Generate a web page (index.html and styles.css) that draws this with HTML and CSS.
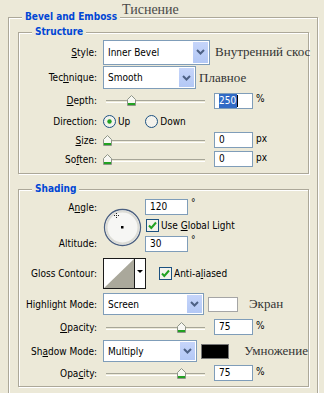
FILE: index.html
```html
<!DOCTYPE html>
<html lang="en">
<head>
    <meta charset="UTF-8">
    <meta name="viewport" content="width=device-width, initial-scale=1.0">
    <title>Bevel and Emboss</title>
    <link rel="stylesheet" href="styles.css">
</head>
<body>

    <!-- Bevel and Emboss group -->
    <section class="group outer">
        <h1 class="title">Bevel and Emboss</h1>
        <span class="note note-title">Тиснение</span>

        <!-- Structure -->
        <section class="group">
            <h2 class="title title-inner">Structure</h2>
            <div class="rows structure">
                <label class="lbl"><u>S</u>tyle:</label>
                <div class="ctl">
                    <div class="select select-style">
                        <span class="val">Inner Bevel</span>
                        <span class="btn"><svg width="9" height="6" viewBox="0 0 9 6"><path d="M1 1 L4.5 4.5 L8 1" fill="none" stroke="#4d6185" stroke-width="2"/></svg></span>
                    </div>
                    <span class="note note-style">Внутренний скос</span>
                </div>

                <label class="lbl">Tec<u>h</u>nique:</label>
                <div class="ctl">
                    <div class="select select-tech">
                        <span class="val">Smooth</span>
                        <span class="btn"><svg width="9" height="6" viewBox="0 0 9 6"><path d="M1 1 L4.5 4.5 L8 1" fill="none" stroke="#4d6185" stroke-width="2"/></svg></span>
                    </div>
                    <span class="note note-tech">Плавное</span>
                </div>

                <label class="lbl"><u>D</u>epth:</label>
                <div class="ctl">
                    <div class="slider">
                        <svg class="thumb" style="left: 24px" width="9" height="11" viewBox="0 0 9 11"><path d="M0.5 4.5 L4.5 0.5 L8.5 4.5 V10.5 H0.5 Z" fill="#f7f7f2" stroke="#8e9588"/><rect x="1" y="8" width="7" height="2" fill="#21a121"/></svg>
                    </div>
                    <div class="num"><span class="sel">250</span><span class="caret"></span></div>
                    <span class="unit">%</span>
                </div>

                <label class="lbl">Direction:</label>
                <div class="ctl">
                    <svg class="radio" width="13" height="13" viewBox="0 0 13 13"><circle cx="6.5" cy="6.5" r="6" fill="#f3f2ec" stroke="#1c5180"/><circle cx="6.5" cy="6.5" r="2.2" fill="#21a121"/></svg>
                    <span class="opt">Up</span>
                    <svg class="radio radio-down" width="13" height="13" viewBox="0 0 13 13"><circle cx="6.5" cy="6.5" r="6" fill="#f3f2ec" stroke="#1c5180"/></svg>
                    <span class="opt">Down</span>
                </div>

                <label class="lbl"><u>S</u>ize:</label>
                <div class="ctl">
                    <div class="slider">
                        <svg class="thumb" style="left: 0px" width="9" height="11" viewBox="0 0 9 11"><path d="M0.5 4.5 L4.5 0.5 L8.5 4.5 V10.5 H0.5 Z" fill="#f7f7f2" stroke="#8e9588"/><rect x="1" y="8" width="7" height="2" fill="#21a121"/></svg>
                    </div>
                    <div class="num">0</div>
                    <span class="unit">px</span>
                </div>

                <label class="lbl">So<u>f</u>ten:</label>
                <div class="ctl">
                    <div class="slider">
                        <svg class="thumb" style="left: 0px" width="9" height="11" viewBox="0 0 9 11"><path d="M0.5 4.5 L4.5 0.5 L8.5 4.5 V10.5 H0.5 Z" fill="#f7f7f2" stroke="#8e9588"/><rect x="1" y="8" width="7" height="2" fill="#21a121"/></svg>
                    </div>
                    <div class="num">0</div>
                    <span class="unit">px</span>
                </div>
            </div>
        </section>

        <!-- Shading -->
        <section class="group shading-group">
            <h2 class="title title-inner">Shading</h2>
            <div class="rows shading">
                <label class="lbl row-1">A<u>n</u>gle:</label>
                <svg class="dial" width="39" height="39" viewBox="0 0 39 39">
                    <circle cx="19.5" cy="19.5" r="18" fill="#f6f6f4" stroke="#4a5f80" stroke-width="1.3"/>
                    <circle cx="19.5" cy="19.5" r="16" fill="none" stroke="#dcdcd6" stroke-width="2"/>
                    <path d="M13.5 5 V10 M11 7.5 H16" stroke="#222" stroke-width="1" stroke-dasharray="1 1"/>
                    <rect x="18" y="18" width="2.5" height="2.5" fill="#000"/>
                </svg>
                <div class="ctl col-3 row-1">
                    <div class="num num-angle">120</div>
                    <span class="deg">°</span>
                </div>

                <div class="ctl col-3 row-2">
                    <svg class="check" width="13" height="13" viewBox="0 0 13 13"><rect x="0.5" y="0.5" width="12" height="12" fill="#f3f2ec" stroke="#1c5180"/><path d="M3 6.5 L5.3 9 L10 3.5" fill="none" stroke="#21a121" stroke-width="2"/></svg>
                    <span class="opt">Use <u>G</u>lobal Light</span>
                </div>

                <label class="lbl row-3">Altitude:</label>
                <div class="ctl col-3 row-3">
                    <div class="num num-angle">30</div>
                    <span class="deg">°</span>
                </div>

                <label class="lbl row-4">Gloss Contour:</label>
                <div class="ctl wide row-4">
                    <svg class="contour" width="43" height="31" viewBox="0 0 43 31">
                        <rect x="0.5" y="0.5" width="42" height="30" fill="#fff" stroke="#1a1a1a"/>
                        <polygon points="1,30 31,1 31,30" fill="#aaa89b"/>
                        <line x1="31.5" y1="0" x2="31.5" y2="31" stroke="#1a1a1a"/>
                        <polygon points="34,12 40,12 37,15" fill="#000"/>
                    </svg>
                    <svg class="check check-aa" width="13" height="13" viewBox="0 0 13 13"><rect x="0.5" y="0.5" width="12" height="12" fill="#f3f2ec" stroke="#1c5180"/><path d="M3 6.5 L5.3 9 L10 3.5" fill="none" stroke="#21a121" stroke-width="2"/></svg>
                    <span class="opt">Anti-a<u>l</u>iased</span>
                </div>

                <label class="lbl row-5">Hi<u>g</u>hlight Mode:</label>
                <div class="ctl wide row-5">
                    <div class="select select-mode">
                        <span class="val">Screen</span>
                        <span class="btn"><svg width="9" height="6" viewBox="0 0 9 6"><path d="M1 1 L4.5 4.5 L8 1" fill="none" stroke="#4d6185" stroke-width="2"/></svg></span>
                    </div>
                    <span class="swatch swatch-light"></span>
                    <span class="note note-screen">Экран</span>
                </div>

                <label class="lbl row-6"><u>O</u>pacity:</label>
                <div class="ctl wide row-6">
                    <div class="slider">
                        <svg class="thumb" style="left: 74px" width="9" height="11" viewBox="0 0 9 11"><path d="M0.5 4.5 L4.5 0.5 L8.5 4.5 V10.5 H0.5 Z" fill="#f7f7f2" stroke="#8e9588"/><rect x="1" y="8" width="7" height="2" fill="#21a121"/></svg>
                    </div>
                    <div class="num">75</div>
                    <span class="unit">%</span>
                </div>

                <label class="lbl row-7">Sh<u>a</u>dow Mode:</label>
                <div class="ctl wide row-7">
                    <div class="select select-mode">
                        <span class="val">Multiply</span>
                        <span class="btn"><svg width="9" height="6" viewBox="0 0 9 6"><path d="M1 1 L4.5 4.5 L8 1" fill="none" stroke="#4d6185" stroke-width="2"/></svg></span>
                    </div>
                    <span class="swatch swatch-dark"></span>
                    <span class="note note-multiply">Умножение</span>
                </div>

                <label class="lbl row-8">Opa<u>c</u>ity:</label>
                <div class="ctl wide row-8">
                    <div class="slider">
                        <svg class="thumb" style="left: 74px" width="9" height="11" viewBox="0 0 9 11"><path d="M0.5 4.5 L4.5 0.5 L8.5 4.5 V10.5 H0.5 Z" fill="#f7f7f2" stroke="#8e9588"/><rect x="1" y="8" width="7" height="2" fill="#21a121"/></svg>
                    </div>
                    <div class="num">75</div>
                    <span class="unit">%</span>
                </div>
            </div>
        </section>
    </section>

</body>
</html>
```

FILE: styles.css
```css
body {
    margin: 0;
    width: 324px;
    height: 393px;
    overflow: hidden;
    background: #ece9d8;
    font-family: "DejaVu Sans Condensed", "Liberation Sans", sans-serif;
    font-size: 10px;
    color: #000;
}
.group {
    border: 1px solid #aca899;
    box-shadow: inset 1px 1px 0 #fff, 1px 1px 0 #fff;
}
.outer {
    position: relative;
    width: 310px;
    box-sizing: border-box;
    margin: 17px 0 0 8px;
    padding: 0 9px 8px;
}
.outer > .group {
    width: 291px;
    box-sizing: border-box;
    margin-top: 8px;
}
.outer > .shading-group {
    margin-top: 15px;
}
.title {
    width: fit-content;
    height: 14px;
    margin: -8px 0 0 4px;
    padding: 0 3px;
    background: #ece9d8;
    color: #0046d5;
    font-size: 10px;
    font-weight: bold;
    line-height: 14px;
}
.title-inner {
    margin-left: 13px;
}
.note {
    font-family: "Liberation Serif", serif;
    font-size: 13px;
    color: #333;
    white-space: nowrap;
}
.note-title {
    position: absolute;
    left: 113px;
    top: -15px;
    font-size: 14px;
    line-height: 14px;
    color: #4a4a4a;
}
.note-style { margin-left: 5px; }
.note-tech { margin-left: 3px; }
.note-screen { margin-left: 11px; }
.note-multiply { margin-left: 15px; }

/* form rows */
.rows {
    display: grid;
    grid-template-columns: 84px 1fr;
    align-items: center;
}
.structure {
    grid-template-rows: 26px 25px 21px 20px 18px 20px;
    padding-bottom: 4px;
}
.shading {
    grid-template-columns: 84px 42px 1fr;
    grid-template-rows: 18px 18px 19px 40px 22px 24px 24px 20px;
    padding: 2px 0 3px;
}
.lbl {
    grid-column: 1;
    padding-right: 6px;
    text-align: right;
    white-space: nowrap;
}
.ctl {
    display: flex;
    align-items: center;
    white-space: nowrap;
}
.wide { grid-column: 2 / -1; }
.col-3 { grid-column: 3; }
.row-1 { grid-row: 1; }
.row-2 { grid-row: 2; }
.row-3 { grid-row: 3; }
.row-4 { grid-row: 4; }
.row-5 { grid-row: 5; }
.row-6 { grid-row: 6; }
.row-7 { grid-row: 7; }
.row-8 { grid-row: 8; }
.dial {
    grid-column: 2;
    grid-row: 1 / 4;
    margin-top: 4px;
}

/* dropdowns */
.select {
    display: flex;
    box-sizing: border-box;
    border: 1px solid #7f9db9;
    background: #fff;
}
.select .val {
    flex: 1;
    padding-left: 4px;
    align-self: center;
}
.select .btn {
    display: flex;
    align-items: center;
    justify-content: center;
    width: 15px;
    margin: 1px;
    background: linear-gradient(#c6d5fa, #b3c8f5);
}
.select-style { width: 107px; height: 25px; }
.select-tech { width: 93px; height: 23px; }
.select-mode { width: 101px; height: 22px; }

/* sliders and numbers */
.slider {
    position: relative;
    width: 105px;
    height: 11px;
}
.slider::before {
    content: "";
    position: absolute;
    left: 3px;
    right: 3px;
    top: 5px;
    height: 1px;
    border-top: 1px solid #a7a698;
    border-bottom: 1px solid #fff;
}
.thumb {
    position: absolute;
    top: 0;
}
.num {
    box-sizing: border-box;
    width: 39px;
    height: 16px;
    margin-left: 6px;
    padding-left: 4px;
    border: 1px solid #7f9db9;
    background: #fff;
    line-height: 14px;
    display: flex;
    align-items: center;
}
.num-angle {
    width: 43px;
    margin-left: 0;
}
.sel {
    background: #316ac5;
    color: #fff;
    padding-right: 1px;
}
.caret {
    width: 1px;
    height: 12px;
    background: #000;
}
.unit { margin-left: 3px; margin-top: -4px; }
.deg { margin-left: 3px; align-self: flex-start; margin-top: -2px; }

/* radios and checks */
.opt { margin-left: 2px; }
.radio-down { margin-left: 15px; }
.check { margin-left: 1px; }
.check-aa { margin-left: 13px; }

.swatch {
    box-sizing: border-box;
    width: 30px;
    height: 15px;
    margin-left: 4px;
    border: 1px solid #a5a5a5;
}
.swatch-light { background: #fff; }
.swatch-dark { background: #000; border-color: #777; }
```
